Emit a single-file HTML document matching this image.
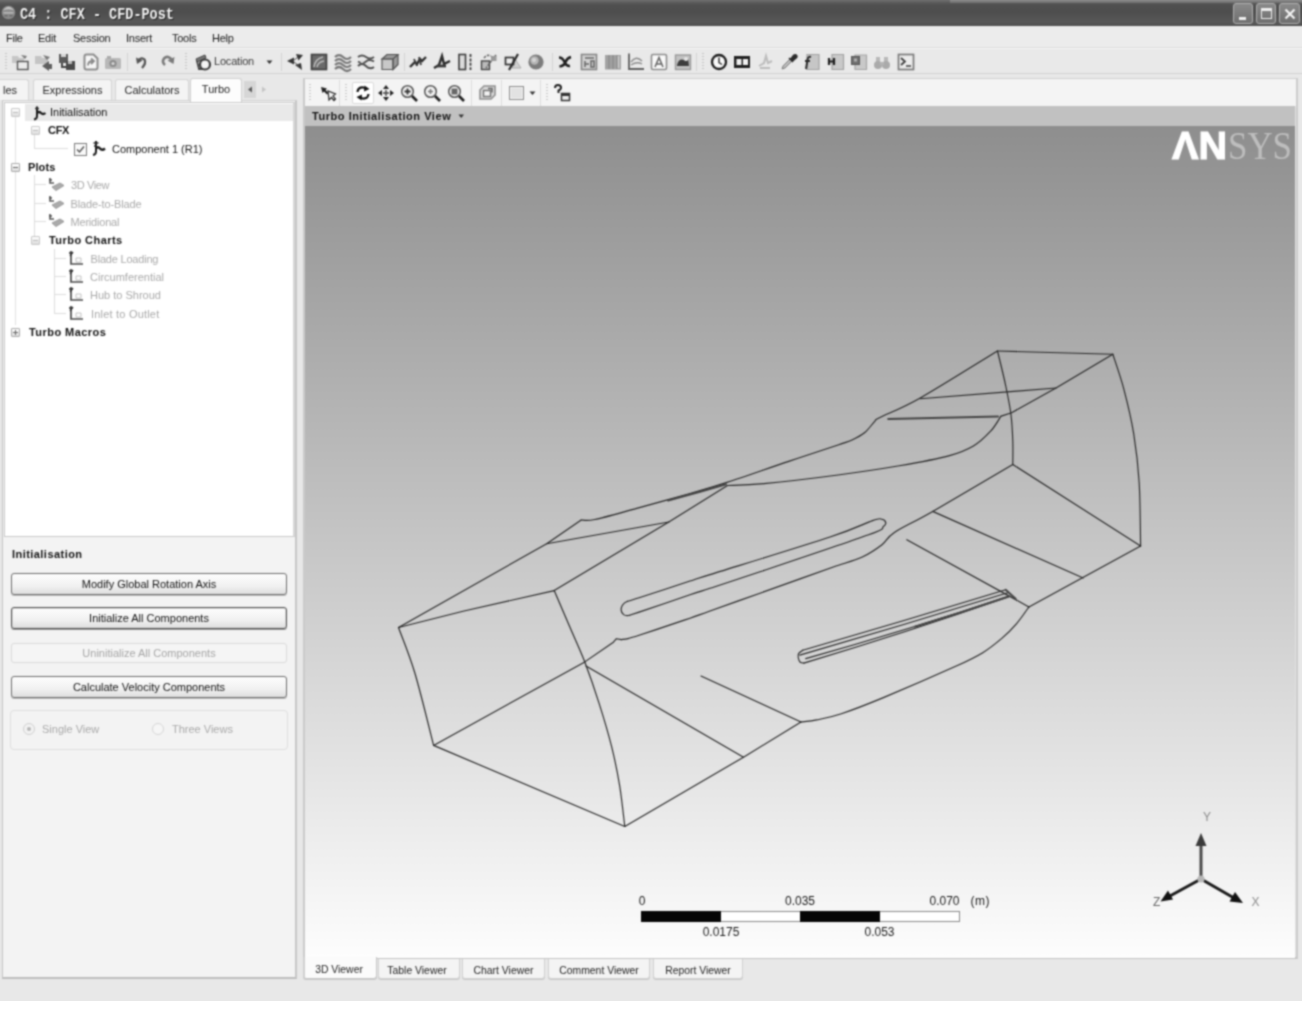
<!DOCTYPE html>
<html lang="en">
<head>
<meta charset="utf-8">
<title>C4 : CFX - CFD-Post</title>
<style>
*{box-sizing:border-box;margin:0;padding:0}
html,body{width:1313px;height:1013px;overflow:hidden;background:#fff}
body{font-family:"Liberation Sans",sans-serif;font-size:11px;color:#111;position:relative}
.abs{position:absolute}
#win{position:absolute;left:0;top:0;width:1302px;height:1001px;background:#e8e8e8;overflow:hidden;filter:url(#soft)}
#title{position:absolute;left:0;top:0;width:1302px;height:26px;background:linear-gradient(#727272 0,#5e5e5e 2px,#505050 5px,#4d4d4d 12px,#585858 22px,#4e4e4e 26px)}
#title .txt{position:absolute;left:20px;top:6.5px;font-family:"Liberation Mono",monospace;font-weight:bold;font-size:13.5px;line-height:16px;color:#f4f4f4;white-space:pre;transform-origin:0 50%;transform:scale(1,1.22);text-shadow:1px 1px 0 #222}
.tb{position:absolute;top:3px;width:20px;height:21px;border:1px solid #b0b0b0;border-radius:3px;background:linear-gradient(#8a8a8a,#6e6e6e)}
#menu{position:absolute;left:0;top:26px;width:1302px;height:22px;background:#ececec;border-bottom:1px solid #dcdcdc}
#menu span{position:absolute;top:5.500px;line-height:13px;color:#1a1a1a;letter-spacing:-.25px}
#tool{position:absolute;left:0;top:48px;width:1302px;height:26px;background:#e9e9e9;border-top:1px solid #f6f6f6;border-bottom:1px solid #d2d2d2}
.ic{position:absolute;width:18px;height:18px;top:53px}
.sep{position:absolute;width:1px;background:#d2d2d2}
.tab{position:absolute;top:79px;height:21px;background:#f4f4f4;border:1px solid #d4d4d4;border-bottom:none;border-radius:3px 3px 0 0;text-align:center;line-height:20px;color:#222}
#lp{position:absolute;left:2px;top:100px;width:295px;height:879px;background:#f3f3f3;border:1px solid #c4c4c4;border-top-color:#d0d0d0;border-right:2px solid #c6c6c6;border-bottom:2px solid #bdbdbd}
#tree{position:absolute;left:4px;top:102px;width:291px;height:435px;background:#fff;border:1px solid #c9c9c9;border-right:2px solid #d6d6d6}
.row{position:absolute;left:0;height:18px;line-height:18px;white-space:nowrap}
.dis{color:#a9a9a9}
.b{font-weight:bold;letter-spacing:.45px}
.btn{position:absolute;left:11px;width:276px;height:22px;border:1px solid #6c6c6c;border-radius:3px;background:linear-gradient(#fdfdfd,#f1f1f1 60%,#dedede);text-align:center;line-height:20px;color:#111;box-shadow:0 1px 0 #bbb}
#vw{position:absolute;left:303px;top:78px;width:995px;height:881px;border:1px solid #cfcfcf;border-left:2px solid #cacaca;border-right:2px solid #cccccc;border-bottom:2px solid #c4c4c4;background:#e2e2e2}
#vtool{position:absolute;left:305px;top:79px;width:991px;height:27px;background:#f4f4f4}
#vhead{position:absolute;left:305px;top:106px;width:990px;height:20px;background:#c1c1c1}
#gl{position:absolute;left:305px;top:126px;width:990px;height:832px;background:linear-gradient(#8e8e8e 0,#fdfdfd 100%)}
.vtab{position:absolute;top:959px;height:20px;background:#f4f4f4;border:1px solid #d0d0d0;border-top:none;border-radius:0 0 3px 3px;text-align:center;line-height:24px;font-size:10.4px;color:#222;box-shadow:0 1px 0 #c8c8c8}
svg{position:absolute;overflow:visible}
.sc{font-size:12px;line-height:14px;text-align:center;color:#161616}
.ex{position:absolute;width:9px;height:9px;border:1px solid #c8c8c8;background:linear-gradient(#fff,#dcdcdc);border-radius:1px}
.ex::after{content:"";position:absolute;left:1px;top:3px;width:5px;height:1px;background:#bbb}
.ex.dk{border-color:#aaa}
.ex.dk::after{background:#666}
</style>
</head>
<body>
<svg width="0" height="0" style="position:absolute"><filter id="soft" x="0" y="0" width="100%" height="100%" color-interpolation-filters="sRGB"><feColorMatrix type="saturate" values="0"/><feConvolveMatrix order="5" kernelMatrix="0.00048 0.00501 0.01095 0.00501 0.00048 0.00501 0.05222 0.11405 0.05222 0.00501 0.01095 0.11405 0.24912 0.11405 0.01095 0.00501 0.05222 0.11405 0.05222 0.00501 0.00048 0.00501 0.01095 0.00501 0.00048" edgeMode="duplicate" preserveAlpha="true"/></filter></svg>
<div id="win">
<!--TITLE-->
<div id="title">
 <svg style="left:1px;top:4px" width="16" height="18" viewBox="0 0 16 18"><circle cx="7.500" cy="8.500" r="6.800" fill="#8a8a8a"/><path d="M2 6.500q5.500-7.500 11 0q-5.500-2.500-11 0z" fill="#c4c4c4"/><path d="M2.500 8h10v1.600h-10z" fill="#b8b8b8"/><path d="M3.500 11h3v1.600h-3zM8.500 11h3v1.600h-3z" fill="#6a6a6a"/></svg>
 <div class="txt">C4 : CFX - CFD-Post</div>
 <i class="abs" style="left:950px;top:0;width:352px;height:3px;background:linear-gradient(#8e8e8e,#6a6a6a)"></i>
 <div class="tb" style="left:1233px"><i class="abs" style="left:5px;top:13px;width:7px;height:3px;background:#f2f2f2"></i></div>
 <div class="tb" style="left:1256px"><i class="abs" style="left:4px;top:4px;width:11px;height:11px;border:1px solid #eee;border-top:3px solid #eee"></i></div>
 <div class="tb" style="left:1279px;width:21px"><svg style="left:4px;top:4px" width="12" height="12" viewBox="0 0 12 12"><path d="M1.5 1.5l9 9M10.5 1.5l-9 9" stroke="#f4f4f4" stroke-width="2.2" fill="none"/></svg></div>
</div>
<!--MENU-->
<div id="menu">
 <span style="left:6px">File</span><span style="left:38px">Edit</span><span style="left:73px">Session</span><span style="left:126px">Insert</span><span style="left:172px">Tools</span><span style="left:212px">Help</span>
</div>
<!--TOOLBAR-->
<div id="tool"></div>
<!--ICONS-->
<i class="abs" style="left:5px;top:53px;width:2px;height:18px;background:repeating-linear-gradient(#c4c4c4 0 1px,transparent 1px 3px)"></i>
<svg style="left:11px;top:53px;filter:blur(0.5px)" width="18" height="18" viewBox="0 0 18 18"><path d="M1 3h6l1 2h5v5H1z" fill="#c6c6c6"/><rect x="6.5" y="8.500" width="10.500" height="8" fill="#ececec" stroke="#555" stroke-width="1.400"/><path d="M10 2l6 1-2 3z" fill="#777"/></svg>
<svg style="left:35px;top:53px;filter:blur(0.5px)" width="18" height="18" viewBox="0 0 18 18"><path d="M0 3h6l1 2h6v6H0z" fill="#c4c4c4"/><path d="M8 2l7 2-3 3z" fill="#777"/><path d="M7 13l7-5v3h3v5h-3v2z" fill="#5e5e5e"/></svg>
<svg style="left:58px;top:53px;filter:blur(0.5px)" width="18" height="18" viewBox="0 0 18 18"><rect x="1" y="1" width="9" height="9" fill="#5a5a5a"/><rect x="3" y="1" width="5" height="3" fill="#d8d8d8"/><rect x="8" y="8" width="9" height="9" fill="#4a4a4a"/><rect x="10" y="8" width="4" height="3" fill="#bbb"/><path d="M4 10v4h5" stroke="#444" stroke-width="2" fill="none"/></svg>
<svg style="left:82px;top:53px;filter:blur(0.5px)" width="18" height="18" viewBox="0 0 18 18"><path d="M2.5 3.5q0-2 2-2h7l4 4v9q0 2-2 2h-9q-2 0-2-2z" fill="#f6f6f6" stroke="#8c8c8c" stroke-width="2"/><path d="M6 12.500q0-4.500 5-4.500M9 5.500l3 2.500L9 11" stroke="#8a8a8a" stroke-width="1.800" fill="none"/></svg>
<svg style="left:104px;top:53px;filter:blur(0.5px)" width="18" height="18" viewBox="0 0 18 18"><rect x="1" y="5" width="16" height="11" rx="1.5" fill="#b8b8b8"/><rect x="3" y="3" width="4" height="3" fill="#aaa"/><circle cx="9" cy="10.5" r="3.6" fill="#8a8a8a"/><circle cx="9" cy="10.5" r="1.6" fill="#d8d8d8"/></svg>
<i class="sep" style="left:127px;top:53px;height:18px"></i>
<svg style="left:133px;top:53px;filter:blur(0.5px)" width="18" height="18" viewBox="0 0 18 18"><path d="M5 8Q8.500 3.500 11.500 6.500Q13.500 10 9 15" stroke="#555" stroke-width="2.300" fill="none"/><path d="M3 4.500l1 6.500 5.500-3.500z" fill="#555"/></svg>
<svg style="left:158px;top:53px;filter:blur(0.5px)" width="18" height="18" viewBox="0 0 18 18"><path d="M14.5 7.5Q10 1.5 6 5.5Q3.5 9 7 12" stroke="#7a7a7a" stroke-width="2.6" fill="none"/><path d="M16.5 4l-1 7-6-3.5z" fill="#7a7a7a"/></svg>
<i class="abs" style="left:185px;top:53px;width:2px;height:18px;background:repeating-linear-gradient(#c4c4c4 0 1px,transparent 1px 3px)"></i>
<svg style="left:194px;top:53px;filter:blur(0.5px)" width="18" height="18" viewBox="0 0 18 18"><path d="M2 6l9-4 1 3-9 4z" fill="#777" stroke="#444" stroke-width="1"/><path d="M3 8l2 8h4" stroke="#444" stroke-width="1.8" fill="none"/><circle cx="11" cy="11.5" r="5" fill="#f4f4f4" stroke="#3c3c3c" stroke-width="2.2"/></svg>
<span class="abs" style="left:214px;top:55px;line-height:13px;color:#3a3a3a;letter-spacing:-0.2px">Location</span>
<svg style="left:266px;top:60px" width="7" height="5" viewBox="0 0 7 5"><path d="M0.5 0.5h6L3.5 4z" fill="#333"/></svg>
<i class="sep" style="left:281px;top:53px;height:18px"></i>
<svg style="left:286px;top:53px;filter:blur(0.5px)" width="18" height="18" viewBox="0 0 18 18"><path d="M1 8l7-3.5v7z" fill="#333"/><path d="M10 1l7 1-4.5 5.5z" fill="#333"/><path d="M9 12l6-2 1 7z" fill="#333"/><path d="M7 8l5-4M8 9l5 4" stroke="#555" stroke-width="1"/></svg>
<svg style="left:310px;top:53px;filter:blur(0.5px)" width="18" height="18" viewBox="0 0 18 18"><rect x="1.5" y="1.5" width="15" height="15" fill="#6a6a6a" stroke="#3e3e3e" stroke-width="1.6"/><path d="M4 14Q5 6 13 4M7 14q1-5 7-6" stroke="#bdbdbd" stroke-width="1.6" fill="none"/></svg>
<svg style="left:334px;top:53px;filter:blur(0.5px)" width="18" height="18" viewBox="0 0 18 18"><path d="M1 4q4-4 8 0t8 0M1 8q4-4 8 0t8 0M1 12q4-4 8 0t8 0M1 16q4-4 8 0t8 0" stroke="#777" stroke-width="2.2" fill="none"/></svg>
<svg style="left:357px;top:53px;filter:blur(0.5px)" width="18" height="18" viewBox="0 0 18 18"><path d="M1 4q4-3 8 0t8 0M1 8.5q5 3 8 0t8 0M1 13q4-4 8 0t8 1" stroke="#505050" stroke-width="2" fill="none"/><circle cx="5" cy="8.5" r="1.6" fill="#ddd"/><circle cx="12" cy="12" r="1.6" fill="#ddd"/></svg>
<svg style="left:381px;top:53px;filter:blur(0.5px)" width="18" height="18" viewBox="0 0 18 18"><path d="M1 6l5-4.5h11v10l-5 5H1z" fill="#9a9a9a"/><path d="M1 6h11v10.5H1z" fill="#c8c8c8"/><path d="M1 6l5-4.5h11l-5 4.5zM12 6v10.5l5-5v-10" fill="none" stroke="#505050" stroke-width="1.2"/><path d="M1 6h11v10.5H1z" fill="none" stroke="#5a5a5a" stroke-width="1.2"/></svg>
<i class="sep" style="left:404px;top:53px;height:18px"></i>
<svg style="left:409px;top:53px;filter:blur(0.5px)" width="18" height="18" viewBox="0 0 18 18"><path d="M1 14l5-5 2 2 3-5 2 2 4-4" stroke="#2e2e2e" stroke-width="2.400" fill="none"/><path d="M5 6l3 7M10 4l2 8" stroke="#3a3a3a" stroke-width="1.800"/></svg>
<svg style="left:433px;top:53px;filter:blur(0.5px)" width="18" height="18" viewBox="0 0 18 18"><path d="M1 15l5-3 3-9 2 8 6-3" stroke="#2a2a2a" stroke-width="2.400" fill="none"/><path d="M4 13h9" stroke="#3a3a3a" stroke-width="2.800"/></svg>
<svg style="left:457px;top:53px;filter:blur(0.5px)" width="18" height="18" viewBox="0 0 18 18"><rect x="2" y="1.5" width="6.5" height="15" fill="#dcdcdc" stroke="#3a3a3a" stroke-width="1.6"/><path d="M13.5 1v16" stroke="#3a3a3a" stroke-width="1.8" stroke-dasharray="3 1.4"/></svg>
<svg style="left:480px;top:53px;filter:blur(0.5px)" width="18" height="18" viewBox="0 0 18 18"><rect x="1.5" y="8" width="8" height="8.5" fill="#bbb" stroke="#444" stroke-width="1.4"/><path d="M4 5q3-4 7-2M16 2L6 15" stroke="#666" stroke-width="1.6" fill="none" stroke-dasharray="2.5 1.2"/><rect x="11" y="3" width="5.5" height="5" fill="#999"/></svg>
<svg style="left:504px;top:53px;filter:blur(0.5px)" width="18" height="18" viewBox="0 0 18 18"><path d="M11 6l6 9H8z" fill="#d0d0d0" stroke="#aaa" stroke-width="1"/><rect x="1.5" y="4.5" width="8" height="7" fill="#eee" stroke="#333" stroke-width="1.7"/><path d="M14 1L5 17" stroke="#2a2a2a" stroke-width="2.2"/></svg>
<svg style="left:527px;top:53px;filter:blur(0.5px)" width="18" height="18" viewBox="0 0 18 18"><circle cx="9" cy="9" r="7.6" fill="#7c7c7c"/><circle cx="7.5" cy="7.5" r="4.2" fill="#b6b6b6"/><circle cx="7" cy="7" r="2" fill="#d6d6d6"/></svg>
<i class="sep" style="left:552px;top:53px;height:18px"></i>
<svg style="left:555.5px;top:53px;filter:blur(0.5px)" width="18" height="18" viewBox="0 0 18 18"><path d="M3 4.500q3.500 0 5.500 4.500t5.500 4M15 4q-4 1-5.500 5t-6 4.500" stroke="#1e1e1e" stroke-width="2.500" fill="none"/></svg>
<svg style="left:580px;top:53px;filter:blur(0.5px)" width="18" height="18" viewBox="0 0 18 18"><rect x="1.5" y="1.5" width="15" height="15" fill="#d2d2d2" stroke="#858585" stroke-width="1.6"/><path d="M5 5h9M5 8v6M5 11h4M11 8v6h3v-6z" stroke="#666" stroke-width="1.5" fill="none"/></svg>
<svg style="left:603.5px;top:53px;filter:blur(0.5px)" width="18" height="18" viewBox="0 0 18 18"><rect x="1" y="2" width="16" height="14.5" fill="#a2a2a2"/><path d="M5 2v14M9 2v14M13 2v14" stroke="#8a8a8a" stroke-width="1.4"/><path d="M14.5 3v12" stroke="#d0d0d0" stroke-width="1.5"/></svg>
<svg style="left:627px;top:53px;filter:blur(0.5px)" width="18" height="18" viewBox="0 0 18 18"><path d="M2 0.5v15.5h15" stroke="#5e5e5e" stroke-width="1.8" fill="none"/><path d="M4 9q5-7 11-1M4 12q6-4 11-1" stroke="#8a8a8a" stroke-width="1.4" fill="none"/></svg>
<svg style="left:650px;top:53px;filter:blur(0.5px)" width="18" height="18" viewBox="0 0 18 18"><rect x="1.5" y="1.5" width="15" height="15" rx="1.5" fill="#fafafa" stroke="#8c8c8c" stroke-width="1.6"/><path d="M5 14l4-9.5 4 9.5M6.5 11h5" stroke="#666" stroke-width="1.6" fill="none"/></svg>
<svg style="left:673.5px;top:53px;filter:blur(0.5px)" width="18" height="18" viewBox="0 0 18 18"><rect x="1.5" y="2" width="15" height="14.5" fill="#c2c2c2" stroke="#999" stroke-width="1.4"/><path d="M3 12q2-7 7-5t4-3l1 9H3z" fill="#3c3c3c"/><circle cx="12" cy="6" r="2" fill="#e6e6e6"/></svg>
<i class="sep" style="left:696px;top:53px;height:18px"></i>
<i class="abs" style="left:702px;top:53px;width:2px;height:18px;background:repeating-linear-gradient(#c4c4c4 0 1px,transparent 1px 3px)"></i>
<svg style="left:710px;top:53px;filter:blur(0.5px)" width="18" height="18" viewBox="0 0 18 18"><circle cx="9" cy="9" r="7" fill="#fafafa" stroke="#1c1c1c" stroke-width="2.3"/><path d="M9 4.5v5l3 2" stroke="#333" stroke-width="1.5" fill="none"/></svg>
<svg style="left:733px;top:53px;filter:blur(0.5px)" width="18" height="18" viewBox="0 0 18 18"><rect x="1" y="3" width="16" height="12" fill="#1e1e1e"/><rect x="3.5" y="6" width="5" height="6" fill="#f2f2f2"/><rect x="10" y="6" width="5" height="6" fill="#f2f2f2"/></svg>
<svg style="left:756px;top:53px;filter:blur(0.5px)" width="18" height="18" viewBox="0 0 18 18"><path d="M3 13l5-3 2-7 2 7 4-2M4 15h10" stroke="#bcbcbc" stroke-width="2" fill="none"/></svg>
<svg style="left:780px;top:53px;filter:blur(0.5px)" width="18" height="18" viewBox="0 0 18 18"><path d="M2 16l1-3 7-7 2 2-7 7z" fill="#bdbdbd" stroke="#7a7a7a" stroke-width="1"/><path d="M9 5l4 4M10.5 6.5l3-4q2-1.5 3 0t-0.5 2.5l-3.5 3z" fill="#2a2a2a" stroke="#2a2a2a" stroke-width="1.6"/></svg>
<svg style="left:803px;top:53px;filter:blur(0.5px)" width="18" height="18" viewBox="0 0 18 18"><path d="M4 1.500h12v15H4z" fill="#c6c6c6" stroke="#a2a2a2" stroke-width="1.2"/><path d="M8 4q-3-1-3.500 3l-1.500 9M2 8h5" stroke="#2a2a2a" stroke-width="2" fill="none"/></svg>
<svg style="left:827px;top:53px;filter:blur(0.5px)" width="18" height="18" viewBox="0 0 18 18"><path d="M5 1.500h11.500v15H5z" fill="#c9c9c9" stroke="#a2a2a2" stroke-width="1.2"/><path d="M2 5v7M7 5v7M2 8.500h5" stroke="#1e1e1e" stroke-width="2.2" fill="none"/></svg>
<svg style="left:850px;top:53px;filter:blur(0.5px)" width="18" height="18" viewBox="0 0 18 18"><path d="M5 2h11.500v14.500H5z" fill="#c9c9c9" stroke="#a5a5a5" stroke-width="1.2"/><rect x="1.5" y="3.5" width="8" height="8" fill="#6e6e6e" stroke="#555" stroke-width="1"/><rect x="4" y="5.5" width="3" height="3" fill="#b0b0b0"/></svg>
<svg style="left:873px;top:53px;filter:blur(0.5px)" width="18" height="18" viewBox="0 0 18 18"><path d="M3 4h4v5H3zM11 4h4v5h-4z" fill="#b8b8b8"/><circle cx="5" cy="12" r="4" fill="#aaa"/><circle cx="13" cy="12" r="4" fill="#aaa"/><rect x="7" y="9" width="4" height="3" fill="#b4b4b4"/></svg>
<svg style="left:897px;top:53px;filter:blur(0.5px)" width="18" height="18" viewBox="0 0 18 18"><rect x="1.5" y="1.5" width="15" height="15" fill="#ececec" stroke="#7a7a7a" stroke-width="1.7"/><path d="M4 5l4 3.500-4 3.500M9 13h5" stroke="#3a3a3a" stroke-width="1.7" fill="none"/></svg>
<!--LEFT-->
<div class="tab" style="left:-6px;width:35px;text-align:right;padding-right:11px">les</div>
<div class="tab" style="left:33px;width:79px">Expressions</div>
<div class="tab" style="left:115px;width:74px">Calculators</div>
<div id="lp"></div>
<div class="tab" style="left:190px;width:52px;top:78px;height:24px;background:#fdfdfd;border-color:#cfcfcf;line-height:21px;z-index:3">Turbo</div>
<div class="abs" style="left:244px;top:81px;width:12px;height:17px;background:#d6d6d6"></div>
<svg style="left:247px;top:86px" width="6" height="7" viewBox="0 0 6 7"><path d="M5 0.500v6L1 3.500z" fill="#555"/></svg>
<svg style="left:261px;top:86px" width="6" height="7" viewBox="0 0 6 7"><path d="M1 0.500v6l4-3z" fill="#c4c4c4"/></svg>
<div id="tree">
 <div class="abs" style="left:20px;top:1px;width:268px;height:17px;background:#e9e9e9"></div>
 <!-- connector lines -->
 <i class="abs" style="left:10px;top:14px;width:1px;height:208px;background:#e0e0e0"></i>
 <i class="abs" style="left:29px;top:32px;width:1px;height:14px;background:#dcdcdc"></i>
 <i class="abs" style="left:29px;top:45px;width:34px;height:1px;background:#dcdcdc"></i>
 <i class="abs" style="left:29px;top:72px;width:1px;height:64px;background:#dcdcdc"></i>
 <i class="abs" style="left:29px;top:81px;width:12px;height:1px;background:#dcdcdc"></i>
 <i class="abs" style="left:29px;top:100px;width:12px;height:1px;background:#dcdcdc"></i>
 <i class="abs" style="left:29px;top:118px;width:12px;height:1px;background:#dcdcdc"></i>
 <i class="abs" style="left:49px;top:146px;width:1px;height:64px;background:#dcdcdc"></i>
 <i class="abs" style="left:49px;top:155px;width:12px;height:1px;background:#dcdcdc"></i>
 <i class="abs" style="left:49px;top:173px;width:12px;height:1px;background:#dcdcdc"></i>
 <i class="abs" style="left:49px;top:191px;width:12px;height:1px;background:#dcdcdc"></i>
 <i class="abs" style="left:49px;top:210px;width:12px;height:1px;background:#dcdcdc"></i>
 <!-- expanders -->
 <i class="ex" style="left:6px;top:5px"></i>
 <i class="ex" style="left:26px;top:23px"></i>
 <i class="ex dk" style="left:6px;top:60px"></i>
 <i class="ex" style="left:26px;top:133px"></i>
 <i class="ex dk" style="left:6px;top:225px"><i class="abs" style="left:3px;top:1px;width:1px;height:5px;background:#666"></i></i>
 <!-- rows -->
 <div class="row" style="left:45px;top:0px">Initialisation</div>
 <div class="row b" style="left:43px;top:18px;letter-spacing:-.3px">CFX</div>
 <div class="row" style="left:107px;top:37px;letter-spacing:0">Component 1 (R1)</div>
 <div class="row b" style="left:23px;top:55px;letter-spacing:.1px">Plots</div>
 <div class="row dis" style="left:66px;top:73px;letter-spacing:-.4px">3D View</div>
 <div class="row dis" style="left:65.500px;top:92px;letter-spacing:-.12px">Blade-to-Blade</div>
 <div class="row dis" style="left:65.500px;top:110px;letter-spacing:-.2px">Meridional</div>
 <div class="row b" style="left:44px;top:128px">Turbo Charts</div>
 <div class="row dis" style="left:85.500px;top:147px;letter-spacing:-.2px">Blade Loading</div>
 <div class="row dis" style="left:85px;top:165px">Circumferential</div>
 <div class="row dis" style="left:85px;top:183px">Hub to Shroud</div>
 <div class="row dis" style="left:86px;top:202px;letter-spacing:.2px">Inlet to Outlet</div>
 <div class="row b" style="left:24px;top:220px">Turbo Macros</div>
 <!-- checkbox -->
 <div class="abs" style="left:69px;top:40px;width:13px;height:13px;border:1px solid #7a7a7a;background:#fafafa"></div>
 <svg style="left:71px;top:42px" width="9" height="9" viewBox="0 0 9 9"><path d="M1 4.500l2.500 2.500L8 1.500" stroke="#555" stroke-width="1.5" fill="none"/></svg>
 <!-- icons -->
 <svg style="left:26px;top:2px;filter:blur(.4px)" width="18" height="16" viewBox="0 0 18 16"><path d="M6 1.500v9.500q0 3-3 3.500" stroke="#1a1a1a" stroke-width="2" fill="none"/><path d="M6 8q2-2 4 0t4.500 0" stroke="#1a1a1a" stroke-width="2.2" fill="none"/><path d="M4 3.500h4" stroke="#333" stroke-width="1.4"/></svg>
 <svg style="left:85px;top:37px;filter:blur(.4px)" width="18" height="17" viewBox="0 0 18 17"><path d="M6 1v10.500q0 3-3 3.500" stroke="#1a1a1a" stroke-width="2" fill="none"/><path d="M6 8.500q2-2.500 4 0t5 0" stroke="#1a1a1a" stroke-width="2.300" fill="none"/><path d="M3.500 3h5M4 6h3" stroke="#2a2a2a" stroke-width="1.400"/></svg>

</div>
<!-- plot icons (disabled) -->
<svg style="left:47px;top:177px;filter:blur(.5px)" width="19" height="16" viewBox="0 0 19 16"><path d="M3 1v5h4M2 3h3" stroke="#555" stroke-width="1.600" fill="none"/><path d="M5 10l8-4 4 2.500-8 5z" fill="#aaa" stroke="#9a9a9a" stroke-width="1"/></svg>
<svg style="left:47px;top:195px;filter:blur(.5px)" width="19" height="16" viewBox="0 0 19 16"><path d="M3 1v5h4M2 3h3" stroke="#555" stroke-width="1.600" fill="none"/><path d="M5 10l8-4 4 2.500-8 5z" fill="#aaa" stroke="#9a9a9a" stroke-width="1"/></svg>
<svg style="left:47px;top:213px;filter:blur(.5px)" width="19" height="16" viewBox="0 0 19 16"><path d="M3 1v5h4M2 3h3" stroke="#555" stroke-width="1.600" fill="none"/><path d="M5 10l8-4 4 2.500-8 5z" fill="#aaa" stroke="#9a9a9a" stroke-width="1"/></svg>
<!-- chart icons -->
<svg style="left:67px;top:250px;filter:blur(.4px)" width="18" height="16" viewBox="0 0 18 16"><path d="M4 1v13h12" stroke="#4a4a4a" stroke-width="1.700" fill="none"/><path d="M2 3h4M3 6l3-4" stroke="#333" stroke-width="1.300"/><path d="M9 8h5v4H9z" fill="none" stroke="#c2c2c2" stroke-width="1"/></svg>
<svg style="left:67px;top:268px;filter:blur(.4px)" width="18" height="16" viewBox="0 0 18 16"><path d="M4 1v13h12" stroke="#4a4a4a" stroke-width="1.700" fill="none"/><path d="M2 3h4M3 6l3-4" stroke="#333" stroke-width="1.300"/><path d="M9 8h5v4H9z" fill="none" stroke="#c2c2c2" stroke-width="1"/></svg>
<svg style="left:67px;top:286px;filter:blur(.4px)" width="18" height="16" viewBox="0 0 18 16"><path d="M4 1v13h12" stroke="#4a4a4a" stroke-width="1.700" fill="none"/><path d="M2 3h4M3 6l3-4" stroke="#333" stroke-width="1.300"/><path d="M9 8h5v4H9z" fill="none" stroke="#c2c2c2" stroke-width="1"/></svg>
<svg style="left:67px;top:305px;filter:blur(.4px)" width="18" height="16" viewBox="0 0 18 16"><path d="M4 1v13h12" stroke="#4a4a4a" stroke-width="1.700" fill="none"/><path d="M2 3h4M3 6l3-4" stroke="#333" stroke-width="1.300"/><path d="M9 8h5v4H9z" fill="none" stroke="#c2c2c2" stroke-width="1"/></svg>
<!-- lower panel -->
<div class="abs b" style="left:12px;top:548px;line-height:13px;color:#111">Initialisation</div>
<div class="btn" style="top:573px">Modify Global Rotation Axis</div>
<div class="btn" style="top:607px;border-color:#4e4e4e;box-shadow:0 1px 0 #999, inset 0 0 0 1px #d8d8d8">Initialize All Components</div>
<div class="btn" style="top:643px;height:20px;line-height:18px;border-color:#d9d9d9;background:#f5f5f5;color:#a6a6a6;box-shadow:none">Uninitialize All Components</div>
<div class="btn" style="top:676px">Calculate Velocity Components</div>
<div class="abs" style="left:10px;top:710px;width:278px;height:40px;border:1px solid #dedede;border-radius:4px"></div>
<div class="abs" style="left:23px;top:723px;width:12px;height:12px;border:1px solid #cfcfcf;border-radius:50%;background:#f2f2f2"></div>
<div class="abs" style="left:27px;top:727px;width:4px;height:4px;border-radius:50%;background:#b4b4b4"></div>
<div class="abs dis" style="left:42px;top:723px;line-height:13px">Single View</div>
<div class="abs" style="left:152px;top:723px;width:12px;height:12px;border:1px solid #d6d6d6;border-radius:50%;background:#f6f6f6"></div>
<div class="abs dis" style="left:172px;top:723px;line-height:13px">Three Views</div>
<!--VIEWER-->
<div id="vw"></div><div id="vtool"></div><div id="vhead"></div><div id="gl"></div>
<i class="abs" style="left:309px;top:84px;width:2px;height:18px;background:repeating-linear-gradient(#c8c8c8 0 1px,transparent 1px 3px)"></i>
<svg style="left:319px;top:84px;filter:blur(0.5px)" width="18" height="18" viewBox="0 0 18 18"><path d="M2 3l6 1.500-1.500 1.500 3 3-1.500 1.500-3-3L3.500 9z" fill="#1e1e1e"/><path d="M9 7l1 9 2.500-2.500 2.500 3 1.500-1.500-2.500-3L16.500 10z" fill="#f4f4f4" stroke="#2a2a2a" stroke-width="1.200"/></svg>
<i class="sep" style="left:339px;top:80px;height:26px;background:#dcdcdc"></i>
<i class="abs" style="left:345px;top:84px;width:2px;height:18px;background:repeating-linear-gradient(#c8c8c8 0 1px,transparent 1px 3px)"></i>
<div class="abs" style="left:352px;top:82px;width:22px;height:22px;background:#fff;border:1px solid #dadada;border-radius:2px"></div>
<svg style="left:354px;top:84px;filter:blur(0.5px)" width="18" height="18" viewBox="0 0 18 18"><path d="M3.500 8Q4 3 9.500 3.500L13 5" stroke="#111" stroke-width="2.200" fill="none"/><path d="M10.500 1.500l5 3.500-5.500 2.500z" fill="#111"/><path d="M14.500 10Q14 15 8.500 14.500L5 13" stroke="#111" stroke-width="2.200" fill="none"/><path d="M7.500 16.500l-5-3.500 5.500-2.500z" fill="#111"/></svg>
<svg style="left:377px;top:84px;filter:blur(0.5px)" width="18" height="18" viewBox="0 0 18 18"><path d="M9 1l3 4H6zM9 17l3-4H6zM1 9l4-3v6zM17 9l-4-3v6z" fill="#222"/><path d="M9 6v6M6 9h6" stroke="#444" stroke-width="1.400"/></svg>
<svg style="left:400px;top:84px;filter:blur(0.5px)" width="18" height="18" viewBox="0 0 18 18"><circle cx="7.500" cy="7.500" r="5.800" fill="#f2f2f2" stroke="#555" stroke-width="1.500"/><path d="M7.500 4.500v6M4.500 7.500h6" stroke="#333" stroke-width="1.800"/><path d="M12 12l5 5" stroke="#1e1e1e" stroke-width="2.600"/></svg>
<svg style="left:423px;top:84px;filter:blur(0.5px)" width="18" height="18" viewBox="0 0 18 18"><circle cx="7.500" cy="7.500" r="5.800" fill="#f2f2f2" stroke="#555" stroke-width="1.500"/><path d="M7.500 5v5M5 7.500h5" stroke="#777" stroke-width="1.500"/><path d="M12 12l5 5" stroke="#1e1e1e" stroke-width="2.600"/></svg>
<svg style="left:447px;top:84px;filter:blur(0.5px)" width="18" height="18" viewBox="0 0 18 18"><circle cx="7.500" cy="7.500" r="5.800" fill="#f2f2f2" stroke="#555" stroke-width="1.500"/><rect x="4.500" y="4.500" width="6" height="6" fill="#666"/><path d="M12 12l5 5" stroke="#1e1e1e" stroke-width="2.600"/></svg>
<i class="sep" style="left:471px;top:80px;height:26px;background:#dcdcdc"></i>
<svg style="left:478px;top:84px;filter:blur(0.5px)" width="18" height="18" viewBox="0 0 18 18"><path d="M2 6l4-4h11v9l-4 4H2z" fill="#dadada" stroke="#8e8e8e" stroke-width="1.600"/><rect x="5.500" y="6.500" width="7" height="6" fill="#f4f4f4" stroke="#777" stroke-width="1.500"/><path d="M10 4.500h4v4" stroke="#666" stroke-width="1.500" fill="none"/></svg>
<i class="sep" style="left:501px;top:80px;height:26px;background:#dcdcdc"></i>
<div class="abs" style="left:509px;top:86px;width:15px;height:14px;border:1px solid #8a8a8a;background:#e2e2e2;box-shadow:inset 0 0 0 1px #f4f4f4"></div>
<svg style="left:529px;top:91px" width="7" height="5" viewBox="0 0 7 5"><path d="M0.500 0.500h6L3.500 4z" fill="#333"/></svg>
<i class="sep" style="left:540px;top:80px;height:26px;background:#dcdcdc"></i>
<i class="abs" style="left:546px;top:84px;width:2px;height:18px;background:repeating-linear-gradient(#c8c8c8 0 1px,transparent 1px 3px)"></i>
<svg style="left:553px;top:84px;filter:blur(0.5px)" width="18" height="18" viewBox="0 0 18 18"><path d="M2 4q0-3 3-3t3 2.500q0 2-2.500 3V9" stroke="#1e1e1e" stroke-width="2" fill="none"/><rect x="8.500" y="9.500" width="8" height="7" fill="#eee" stroke="#333" stroke-width="1.500"/><path d="M8.500 11h8" stroke="#333" stroke-width="2"/></svg>
<div class="abs b" style="left:312px;top:110px;line-height:13px;color:#111;letter-spacing:.55px">Turbo Initialisation View</div>
<svg style="left:458px;top:114px" width="7" height="5" viewBox="0 0 7 5"><path d="M0.500 0.500h5.500L3.200 4z" fill="#333"/></svg>
<svg style="left:0;top:0;filter:blur(.5px)" width="1313" height="200" viewBox="0 0 1313 200"><text x="1172" y="158.500" font-family="Liberation Sans, sans-serif" font-weight="bold" font-size="38" fill="#fff" stroke="#fff" stroke-width="1.1" textLength="55" lengthAdjust="spacingAndGlyphs">ΛN</text><text x="1228" y="158.500" font-family="Liberation Serif, serif" font-size="41" fill="#bebebe" textLength="64" lengthAdjust="spacingAndGlyphs">SYS</text></svg>
<div class="abs" style="left:641px;top:911px;width:319px;height:11px;background:#fff;border:1px solid #8a8a8a"></div>
<div class="abs" style="left:641px;top:911px;width:80px;height:11px;background:#050505"></div>
<div class="abs" style="left:800px;top:911px;width:80px;height:11px;background:#050505"></div>
<div class="abs sc" style="left:612px;top:893.5px;width:60px">0</div>
<div class="abs sc" style="left:770px;top:893.5px;width:60px">0.035</div>
<div class="abs sc" style="left:691px;top:925px;width:60px">0.0175</div>
<div class="abs sc" style="left:849.5px;top:925px;width:60px">0.053</div>
<div class="abs sc" style="left:929.500px;top:893.500px;width:36px;text-align:left;white-space:nowrap">0.070</div>
<div class="abs sc" style="left:970.500px;top:893.500px;width:24px;text-align:left;white-space:nowrap;letter-spacing:.5px">(m)</div>
<svg style="left:0;top:0;filter:blur(.45px)" width="1313" height="1013" viewBox="0 0 1313 1013"><g stroke="#1a1a1a" stroke-width="3" stroke-linecap="round"><path d="M1201 879V843" stroke="#4a4a4a"/><path d="M1201 879l33 19"/><path d="M1201 879l-32 17.500"/></g><path d="M1201 833l5.500 13h-11z" fill="#3a3a3a"/><path d="M1243 903l-13.500-1.500 5.500-9.500z" fill="#111"/><path d="M1160.500 901.500l7.500-11 5 9z" fill="#111"/><circle cx="1201" cy="879" r="3.600" fill="#b6b6b6"/><g font-family="Liberation Sans, sans-serif" font-size="12" fill="#8a8a8a"><text x="1203" y="821">Y</text><text x="1251.500" y="905.500">X</text><text x="1153" y="905.500" fill="#666">Z</text></g></svg>
<div class="vtab" style="left:304px;width:73px;padding-right:3px;background:#fbfbfb;height:22px;line-height:25px;top:957px;border-color:#c6c6c6;border-left:2px solid #d0d0d0;left:303px;width:74px;z-index:2">3D Viewer</div>
<div class="vtab" style="left:378px;width:82px;padding-right:4px;">Table Viewer</div>
<div class="vtab" style="left:462px;width:83px;padding-right:0px;">Chart Viewer</div>
<div class="vtab" style="left:548px;width:102px;padding-right:0px;">Comment Viewer</div>
<div class="vtab" style="left:653px;width:90px;padding-right:0px;">Report Viewer</div>
<!--GEO-->
<svg style="left:0;top:0;" width="1313" height="1013" viewBox="0 0 1313 1013" fill="none" stroke="#262626" stroke-width="1.15" stroke-linejoin="round" stroke-linecap="round">
<path d="M398.5 627.5C401.2 635.0 408.8 652.9 414.7 672.5C420.6 692.1 430.5 733.2 433.6 745.4"/>
<path d="M433.6 745.4L624.8 826.5"/>
<path d="M398.5 627.5L464.0 611.0L554.2 590.6"/>
<path d="M554.2 590.6C556.9 597.0 565.5 616.9 570.6 628.8C575.7 640.7 580.0 649.6 584.8 662.0C589.5 674.4 594.6 689.1 599.1 703.3C603.6 717.4 608.3 733.2 611.7 746.9C615.1 760.6 617.4 772.1 619.6 785.4C621.8 798.7 623.9 819.6 624.8 826.5"/>
<path d="M433.6 745.4L584.8 661.9L613.4 642.2L616.4 638.7L621.3 639.6"/>
<path d="M586.0 666.0L743.5 757.2"/>
<path d="M624.8 826.5L743.5 757.2L801.0 722.0"/>
<path d="M701.0 676.0L801.0 722.0"/>
<path d="M801.0 722.0C803.6 721.6 810.0 721.3 816.7 719.9C823.4 718.5 830.3 717.4 841.4 713.7C852.5 710.0 864.1 705.6 883.4 697.6C902.7 689.6 941.0 673.0 957.4 665.6C973.8 658.2 974.6 657.7 982.0 653.2C989.4 648.7 996.0 643.3 1001.8 638.4C1007.6 633.5 1012.1 628.9 1016.6 623.6C1021.1 618.4 1026.9 609.7 1028.9 606.9"/>
<path d="M1028.9 606.9L1140.6 546.0"/>
<path d="M906.8 539.7L1028.9 606.9"/>
<path d="M932.7 511.4L1083.2 578.0"/>
<path d="M1012.8 464.5C999.4 472.3 952.4 500.1 932.7 511.4C913.0 522.7 902.9 526.8 894.4 532.4C885.9 538.0 887.4 540.6 882.0 544.7C876.6 548.8 870.3 553.3 862.3 557.0C854.3 560.7 844.4 563.1 834.0 566.7C823.6 570.4 812.3 574.5 800.0 578.9C787.7 583.3 775.0 587.9 760.0 593.2C745.0 598.6 721.7 606.8 710.0 611.0C698.3 615.2 696.9 615.8 690.0 618.2C683.1 620.6 677.2 622.5 668.7 625.4C660.2 628.2 645.9 633.1 639.1 635.3C632.3 637.5 631.0 637.9 628.0 638.6C625.0 639.3 622.4 639.4 621.3 639.6"/>
<path d="M398.5 627.5L546.7 543.7L581.2 520.0"/>
<path d="M581.2 520.0C583.5 519.9 585.5 521.4 594.8 519.5C604.0 517.6 620.8 512.7 636.7 508.4C652.6 504.1 675.0 497.8 690.0 493.5C705.0 489.2 710.5 487.8 727.0 482.4C743.5 477.0 770.2 467.6 788.7 461.4C807.2 455.2 827.5 448.6 838.0 445.0C848.5 441.4 847.5 442.1 852.0 440.0C856.5 437.9 861.0 435.6 864.8 432.5C868.6 429.4 872.2 423.9 874.7 421.4C877.2 418.9 872.4 421.4 880.0 417.5C887.6 413.6 900.7 409.1 920.3 398.0C939.9 386.9 984.6 358.8 997.5 351.0"/>
<path d="M546.7 543.7L668.8 522.0"/>
<path d="M554.2 590.6L668.8 522.0L727.5 485.5"/>
<path d="M727.5 485.5C733.6 485.2 745.6 485.4 764.0 483.6C782.4 481.9 815.5 478.0 838.0 475.0C860.5 472.0 880.8 469.0 899.3 465.8C917.8 462.6 936.4 459.2 948.7 455.9C961.1 452.6 966.4 450.1 973.4 446.0C980.4 441.9 986.0 436.1 990.6 431.2C995.2 426.3 999.0 419.0 1000.7 416.6"/>
<path d="M997.5 351.0L1112.8 354.2"/>
<path d="M1112.8 354.2C1114.7 360.1 1120.4 376.1 1123.9 389.3C1127.4 402.6 1131.2 418.1 1133.7 433.7C1136.2 449.3 1138.1 464.3 1139.2 483.0C1140.3 501.7 1140.4 535.5 1140.6 546.0"/>
<path d="M997.5 351.0C998.8 356.6 1003.2 373.8 1005.4 384.3C1007.6 394.8 1009.7 404.6 1010.9 414.0C1012.1 423.4 1012.5 432.6 1012.8 441.0C1013.1 449.4 1012.8 460.6 1012.8 464.5"/>
<path d="M1012.8 464.5L1140.6 546.0"/>
<path d="M1112.8 354.2L1056.0 388.0L1011.6 412.7L1000.5 416.4"/>
<path d="M920.3 398.7L1056.0 388.0"/>
<path d="M627.5 601.3C629.4 600.7 628.7 601.2 639.1 597.8C649.5 594.4 678.2 584.9 690.0 581.0C701.8 577.1 686.7 581.9 710.0 574.6C733.3 567.3 802.9 546.0 830.0 537.0C857.1 528.0 863.9 523.6 872.6 520.6C881.3 517.6 879.8 518.9 882.0 519.3C884.2 519.7 885.6 521.6 885.8 522.8C886.0 524.0 886.3 524.5 883.4 526.5C880.5 528.5 889.2 527.2 868.6 534.8C848.0 542.3 786.4 562.9 760.0 571.8C733.6 580.7 721.7 584.5 710.0 588.3C698.3 592.1 701.8 590.8 690.0 594.8C678.2 598.8 649.2 608.7 639.1 612.1C629.0 615.5 631.1 614.8 629.5 615.3"/>
<path d="M629.5 615.3C619.5 617.8 618 604.5 627.5 601.3"/>
<path d="M802.8 650.2Q904.2 621.0 1005.7 589.8"/>
<path d="M799.8 655.1Q903.7 625.2 1007.7 592.8"/>
<path d="M805.7 658.6Q907.2 630.3 1008.7 596.3"/>
<path d="M803.8 663.1Q906.2 632.6 1008.7 596.8"/>
<path d="M802.8 650.2C802.1 650.8 799.4 652.2 798.6 653.5C797.9 654.8 798.0 656.5 798.3 658.0C798.6 659.5 799.4 661.4 800.3 662.3C801.2 663.1 803.2 663.0 803.8 663.1"/>
<path d="M888.2 418.9L998.0 416.4" stroke-width="2" stroke="#444"/>
<path d="M1005.7 589.8L1015.6 598.7" stroke-width="2" stroke="#444"/>
<path d="M915.0 626.8L960.0 612.6L1008.7 596.5" stroke-width="2" stroke="#444"/>
<path d="M668.0 500.6L700.0 491.8L726.0 484.2" stroke-width="2" stroke="#444"/>
</svg>
</div>
</body>
</html>
